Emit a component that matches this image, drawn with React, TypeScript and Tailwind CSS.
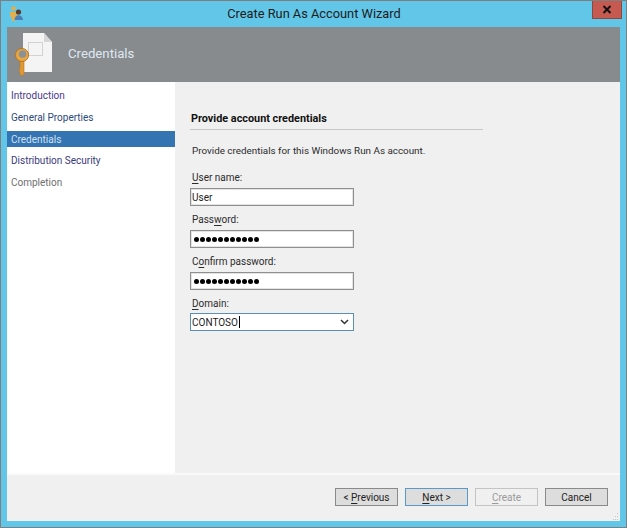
const font = { fontFamily: 'Roboto, "Noto Sans", sans-serif' }

function Hot({ text, at }: { text: string; at: number }) {
  return (
    <>
      {text.slice(0, at)}
      <span className="underline underline-offset-2">{text[at]}</span>
      {text.slice(at + 1)}
    </>
  )
}

function WizardIcon() {
  return (
    <svg width="44" height="50" viewBox="0 0 44 50" className="ml-[7px] mt-[3px] shrink-0">
      <path d="M9 3h21l8 9v30H9z" fill="#f4f4f4" />
      <path d="M30 3l8 9h-8z" fill="#d6d6d6" />
      <rect x="14.5" y="12.5" width="14" height="13" fill="none" stroke="#d2d2d2" />
      <path d="M6 31h4v13l-2 2-2-1.5v-2l-1-1 1-1.2-1-1.3 1-1.2z" fill="#e09a35" stroke="#b87420" strokeWidth=".6" />
      <circle cx="8" cy="25" r="6.5" fill="#e9a83f" stroke="#b87420" />
      <circle cx="8.5" cy="24" r="3.8" fill="#8d9094" />
    </svg>
  )
}

function TitleIcon() {
  return (
    <svg width="15" height="15" viewBox="0 0 15 15">
      <circle cx="4.5" cy="2.5" r="2.3" fill="#dfae4f" />
      <path d="M1 6h7v5H6v4H3v-4H1z" fill="#e3b04b" />
      <circle cx="9.5" cy="6" r="2.6" fill="#5c3a2a" />
      <path d="M5.500 14c0-3 2-4.800 4-4.800s4.500 1.800 4.500 4.800z" fill="#4a7fb8" />
    </svg>
  )
}

function Field({ label, at, value, secret }: { label: string; at: number; value: string; secret?: boolean }) {
  return (
    <div className="mb-[6px]">
      <div className="mb-[2px] h-[16px] pl-[2px] text-[10px] leading-[16px] text-[#2b2b2b]">
        <Hot text={label} at={at} />
      </div>
      <div className="flex h-[18px] w-[164px] items-center border border-[#8f8f8f] bg-white pl-[1px] text-[10px] text-[#222] shadow-[inset_0_0_0_1px_#e4e4e4]">
        {secret ? (
          <div className="flex gap-[1px] pl-[2px]">
            {Array.from({ length: 11 }).map((_, i) => (
              <span key={i} className="h-[5px] w-[5px] rounded-full bg-black" />
            ))}
          </div>
        ) : (
          value
        )}
      </div>
    </div>
  )
}

function Btn({ label, at, tone = 'normal' }: { label: string; at: number; tone?: 'normal' | 'focus' | 'off' }) {
  const cls =
    tone === 'off'
      ? 'border-[#c4c4c4] bg-[#f0f0f0] text-[#9a9a9a]'
      : tone === 'focus'
        ? 'border-[#5a9ac9] bg-[#dddddd] text-[#222]'
        : 'border-[#8a8a8a] bg-[#dddddd] text-[#222]'
  return (
    <div className={`flex h-[18px] w-[63px] items-center justify-center border text-[10px] ${cls}`}>
      <span><Hot text={label} at={at} /></span>
    </div>
  )
}

export default function App() {
  const steps = [
    { name: 'Introduction', cls: 'mb-[6px] text-[#4a3a8c]' },
    { name: 'General Properties', cls: 'mb-[6px] text-[#2c4a7c]' },
    { name: 'Credentials', cls: 'mb-[5px] bg-[#3574b3] text-[#cfe0f0]' },
    { name: 'Distribution Security', cls: 'mb-[6px] text-[#3a3a80]' },
    { name: 'Completion', cls: 'text-[#6f6f6f]' },
  ]

  return (
    <div style={font} className="flex h-[528px] w-[627px] flex-col overflow-hidden border border-[#7f7f7f] bg-[#62c6e8]">
      {/* Title bar */}
      <div className="flex h-[26px] shrink-0 items-start">
        <div className="ml-[8px] mt-[5px] w-[27px]"><TitleIcon /></div>
        <div className="flex-1 pt-[4px] text-center text-[12.800px] leading-[17px] text-[#1c1c1c]">Create Run As Account Wizard</div>
        <div className="mr-[4px] flex h-[18px] w-[30px] items-center justify-center border-x border-b border-[#8a4a44] bg-[#c65a50]">
          <svg width="10" height="9" viewBox="0 0 10 9"><path d="M1.500 1l7 7M8.500 1l-7 7" stroke="#111" strokeWidth="2" /></svg>
        </div>
      </div>

      {/* Client area */}
      <div className="mx-[6px] mb-[6px] flex min-h-0 flex-1 flex-col bg-[#f0f0f0]">
        <div className="flex h-[55px] shrink-0 bg-[#888b8e]">
          <WizardIcon />
          <div className="ml-[10px] pt-[17px] text-[13.200px] leading-[20px] text-[#dfe8f2]">Credentials</div>
        </div>

        <div className="flex min-h-0 flex-1">
          <div className="w-[168px] shrink-0 bg-white pt-[5px]">
            {steps.map(s => (
              <div key={s.name} className={`flex h-[16px] items-center pl-[4px] text-[10px] ${s.cls}`}>
                {s.name}
              </div>
            ))}
          </div>

          <div className="flex-1 pl-[15px] pt-[28px]">
            <div className="h-[20px] w-[293px] border-b border-[#c8c8c8] pl-[1px] pt-[1px] text-[10.850px] font-bold leading-[16px] text-[#111]">
              Provide account credentials
            </div>
            <div className="mb-[11px] mt-[13px] pl-[2px] text-[9.850px] leading-[16px] text-[#2b2b2b]">
              Provide credentials for this Windows Run As account.
            </div>
            <Field label="User name:" at={0} value="User" />
            <Field label="Password:" at={4} value="" secret />
            <Field label="Confirm password:" at={1} value="" secret />
            <div>
              <div className="mb-[1px] h-[16px] pl-[2px] text-[10px] leading-[16px] text-[#2b2b2b]">
                <Hot text="Domain:" at={0} />
              </div>
              <div className="flex h-[18px] w-[164px] items-center justify-between border border-[#5a8fb8] bg-white pl-[1px] pr-[4px] text-[10px] text-[#222]">
                <span className="flex items-center">CONTOSO<span className="ml-[1px] h-[12px] w-px bg-black" /></span>
                <svg width="9" height="6" viewBox="0 0 9 6"><path d="M1 1l3.500 3.500L8 1" fill="none" stroke="#333" strokeWidth="1.5" /></svg>
              </div>
            </div>
          </div>
        </div>

        {/* Footer */}
        <div className="relative flex h-[48px] shrink-0 items-start justify-end gap-[7px] border-t-2 border-[#fafafa] pr-[12px] pt-[13px]">
          <Btn label="< Previous" at={2} />
          <Btn label="Next >" at={0} tone="focus" />
          <Btn label="Create" at={0} tone="off" />
          <Btn label="Cancel" at={7} />
          <svg width="6" height="7" viewBox="0 0 6 7" className="absolute bottom-[1px] right-[1px]">
            <path d="M4 0h1v1H4zM2 3h1v1H2zM4 3h1v1H4zM0 6h1v1H0zM2 6h1v1H2zM4 6h1v1H4z" fill="#c4c4c4" />
          </svg>
        </div>
      </div>
    </div>
  )
}
